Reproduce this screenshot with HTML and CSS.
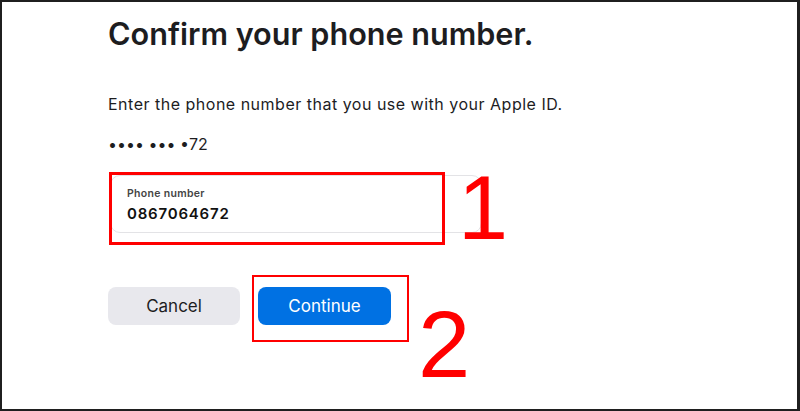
FILE: index.html
```html
<!DOCTYPE html>
<html lang="en">
<head>
    <meta charset="UTF-8">
    <meta name="viewport" content="width=device-width, initial-scale=1.0">
    <title>Confirm your phone number</title>
    <link rel="stylesheet" href="styles.css">
</head>
<body>
    <div class="frame">
        <div class="content">
            <h1>Confirm your phone number.</h1>
            <p class="intro">Enter the phone number that you use with your Apple ID.</p>
            <p class="masked">&bull;&bull;&bull;&bull; &bull;&bull;&bull; &bull;72</p>

            <div class="field">
                <label for="phone">Phone number</label>
                <input type="text" id="phone" value="0867064672">
            </div>

            <div class="actions">
                <button class="btn btn-cancel">Cancel</button>
                <button class="btn btn-continue">Continue</button>
            </div>
        </div>

        <!-- annotations -->
        <div class="mark mark-field"></div>
        <div class="step step-1">1</div>
        <div class="mark mark-button"></div>
        <div class="step step-2">2</div>
    </div>
</body>
</html>
```

FILE: styles.css
```css
html, body {
    margin: 0;
    padding: 0;
    background: #fff;
}
.frame {
    position: relative;
    width: 800px;
    height: 411px;
    box-sizing: border-box;
    border: 2px solid #1f1f1f;
    border-right-width: 3px;
    overflow: hidden;
    font-family: Inter, "Liberation Sans", sans-serif;
    color: #1d1d1f;
}
.content {
    padding: 10px 0 0 106px;
}
h1 {
    margin: 0;
    font-size: 30.6px;
    font-weight: 600;
    line-height: 44px;
    white-space: nowrap;
}
.intro {
    margin: 37px 0 0;
    font-size: 16px;
    letter-spacing: 0.5px;
    line-height: 22px;
    white-space: nowrap;
}
.masked {
    margin: 18px 0 0;
    font-size: 16px;
    line-height: 22px;
}
.field {
    margin-top: 20px;
    margin-left: 2px;
    width: 372px;
    height: 58px;
    box-sizing: border-box;
    padding: 12px 16px 0;
    border: 1px solid #e3e3e6;
    border-radius: 10px;
    display: flex;
    flex-direction: column;
}
.field label {
    font-size: 10.5px;
    line-height: 12px;
    letter-spacing: 0.3px;
    color: #444;
    font-weight: 600;
}
.field input {
    border: none;
    outline: none;
    padding: 0;
    margin-top: 4px;
    font-family: inherit;
    font-size: 15px;
    font-weight: 600;
    letter-spacing: 0.8px;
    color: #111;
    background: transparent;
}
.actions {
    display: flex;
    gap: 18px;
    margin-top: 54px;
}
.btn {
    width: 132px;
    height: 38px;
    border: none;
    border-radius: 8px;
    font-family: inherit;
    font-size: 17px;
    cursor: pointer;
}
.btn-cancel {
    background: #e8e8ed;
    color: #1d1d1f;
}
.btn-continue {
    width: 133px;
    background: #0071e3;
    color: #fff;
}
.mark {
    position: absolute;
    border: 3px solid #ff0000;
    box-sizing: border-box;
}
.mark-field {
    left: 107px;
    top: 170px;
    width: 336px;
    height: 73px;
}
.mark-button {
    left: 250px;
    top: 273px;
    width: 157px;
    height: 67px;
    border-width: 2px;
}
.step {
    position: absolute;
    color: #ff0000;
    font-family: "Liberation Sans", Arial, sans-serif;
    line-height: 1;
}
.step-1 {
    left: 456px;
    top: 161px;
    font-size: 90px;
}
.step-2 {
    left: 416px;
    top: 296px;
    font-size: 94px;
}
```
